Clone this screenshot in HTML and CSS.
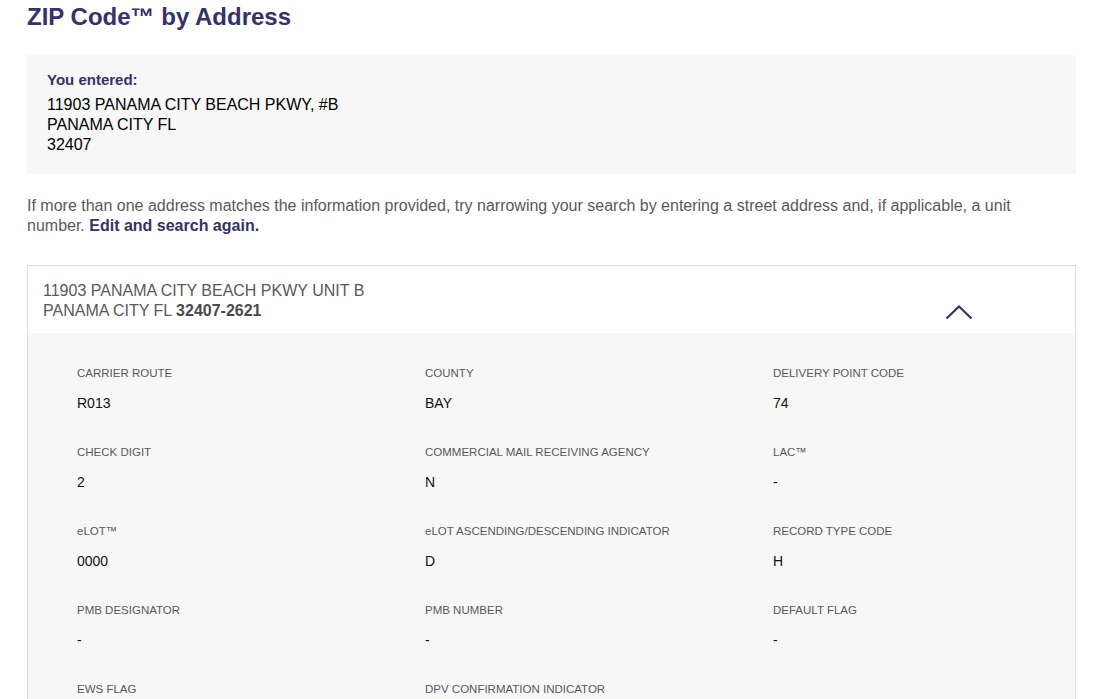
FILE: index.html
```html
<!DOCTYPE html>
<html lang="en">
<head>
<meta charset="utf-8">
<title>ZIP Code by Address</title>
<link rel="stylesheet" href="styles.css">
</head>
<body>
<main class="page">
  <h1 class="title">ZIP Code™ by Address</h1>

  <section class="entered">
    <div class="entered-label">You entered:</div>
    <div class="entered-line">11903 PANAMA CITY BEACH PKWY, #B</div>
    <div class="entered-line">PANAMA CITY FL</div>
    <div class="entered-line">32407</div>
  </section>

  <p class="hint">If more than one address matches the information provided, try narrowing your search by entering a street address and, if applicable, a unit number. <a class="hint-link" href="#">Edit and search again.</a></p>

  <section class="result">
    <div class="result-head">
      <div class="result-addr">
        <div>11903 PANAMA CITY BEACH PKWY UNIT B</div>
        <div>PANAMA CITY FL <strong class="zip">32407-2621</strong></div>
      </div>
      <svg class="chevron" width="28" height="16" viewBox="0 0 28 16" aria-hidden="true">
        <path d="M1.5 14.5 L14 2.5 L26.5 14.5" fill="none" stroke="#333366" stroke-width="2.2"/>
      </svg>
    </div>
    <div class="result-body">
      <div class="field"><div class="f-label">CARRIER ROUTE</div><div class="f-value">R013</div></div>
      <div class="field"><div class="f-label">COUNTY</div><div class="f-value">BAY</div></div>
      <div class="field"><div class="f-label">DELIVERY POINT CODE</div><div class="f-value">74</div></div>

      <div class="field"><div class="f-label">CHECK DIGIT</div><div class="f-value">2</div></div>
      <div class="field"><div class="f-label">COMMERCIAL MAIL RECEIVING AGENCY</div><div class="f-value">N</div></div>
      <div class="field"><div class="f-label">LAC™</div><div class="f-value">-</div></div>

      <div class="field"><div class="f-label">eLOT™</div><div class="f-value">0000</div></div>
      <div class="field"><div class="f-label">eLOT ASCENDING/DESCENDING INDICATOR</div><div class="f-value">D</div></div>
      <div class="field"><div class="f-label">RECORD TYPE CODE</div><div class="f-value">H</div></div>

      <div class="field"><div class="f-label">PMB DESIGNATOR</div><div class="f-value">-</div></div>
      <div class="field"><div class="f-label">PMB NUMBER</div><div class="f-value">-</div></div>
      <div class="field"><div class="f-label">DEFAULT FLAG</div><div class="f-value">-</div></div>

      <div class="field"><div class="f-label">EWS FLAG</div><div class="f-value">-</div></div>
      <div class="field"><div class="f-label">DPV CONFIRMATION INDICATOR</div><div class="f-value">Y</div></div>
    </div>
  </section>
</main>
</body>
</html>
```

FILE: styles.css
```css
html, body {
  margin: 0;
  padding: 0;
  background: #ffffff;
}

body {
  font-family: "Liberation Sans", Arial, Helvetica, sans-serif;
  color: #000000;
}

.page {
  padding: 0 19px 0 27px;
}

.title {
  margin: 0;
  padding-top: 3px;
  font-size: 24px;
  line-height: 27px;
  font-weight: 700;
  color: #333366;
}

.entered {
  margin-top: 25px;
  background: #f7f7f7;
  padding: 15px 20px 19px 20px;
}

.entered-label {
  margin-bottom: 5px;
  font-size: 15px;
  line-height: 20px;
  font-weight: 700;
  color: #333366;
}

.entered-line {
  font-size: 16px;
  line-height: 20px;
  color: #000000;
}

.hint {
  max-width: 1030px;
  margin: 22px 0 29px 0;
  font-size: 16px;
  line-height: 20px;
  color: #595959;
}

.hint-link {
  color: #333366;
  font-weight: 700;
  text-decoration: none;
}

.result {
  border: 1px solid #dcdcdc;
  border-bottom: none;
}

.result-head {
  display: flex;
  justify-content: space-between;
  align-items: flex-end;
  background: #ffffff;
  padding: 15px 102px 12px 15px;
}

.result-addr {
  font-size: 16px;
  line-height: 20px;
  color: #595959;
}

.zip {
  font-weight: 700;
  color: #4a4a4a;
}

.chevron {
  display: block;
  margin-bottom: 1px;
}

.result-body {
  background: #f7f7f7;
  display: grid;
  grid-template-columns: 348px 348px 1fr;
  row-gap: 33px;
  padding: 33px 0 40px 49px;
}

.f-label {
  font-size: 11.5px;
  line-height: 14px;
  color: #595959;
}

.f-value {
  margin-top: 14px;
  font-size: 14px;
  line-height: 18px;
  color: #111111;
}
```
